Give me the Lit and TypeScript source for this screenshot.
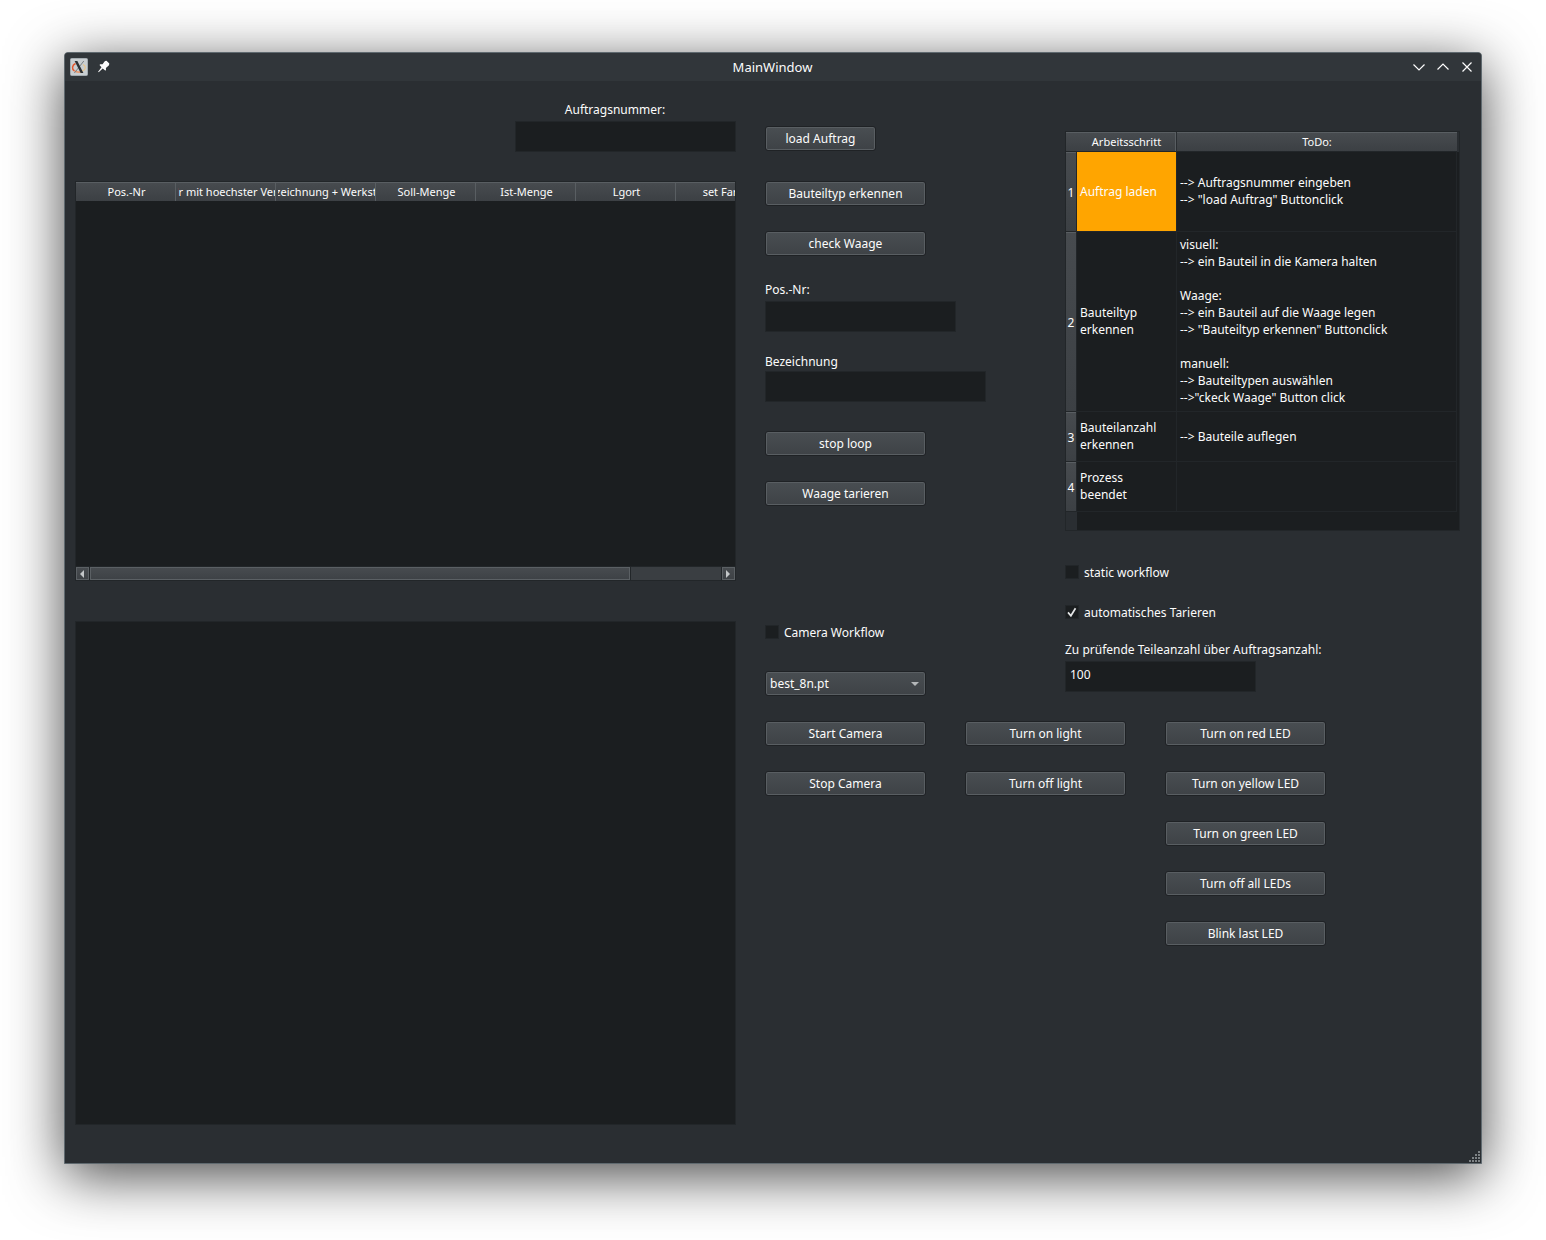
import { LitElement, html, css, svg, nothing } from "lit";
import { customElement, property } from "lit/decorators.js";

const base = css`
  *,
  *::before,
  *::after {
    box-sizing: border-box;
  }
  button,
  input,
  select {
    margin: 0;
    font: inherit;
    color: inherit;
  }
`;

const raised = css`
  .raised {
    border: 1px solid #1f2225;
    border-radius: 3px;
    background: linear-gradient(#494e52, #3e4246);
    box-shadow: inset 0 0 0 1px #595e62;
  }
`;

@customElement("push-button")
class PushButton extends LitElement {
  @property() label = "";

  static styles = [
    base,
    raised,
    css`
      :host {
        display: block;
      }
      .button {
        display: block;
        width: 100%;
        height: 25px;
        padding: 0;
        line-height: 17px;
        text-align: center;
      }
    `,
  ];

  render() {
    return html`<button class="button raised" type="button">${this.label}</button>`;
  }
}

@customElement("text-field")
class TextField extends LitElement {
  @property() label = "";
  @property() value = "";

  static styles = [
    base,
    css`
      :host {
        display: block;
      }
      .label {
        display: block;
        margin-bottom: var(--label-gap, 3px);
        padding-right: var(--label-inset, 0);
        text-align: var(--label-align, left);
        white-space: nowrap;
      }
      .input {
        display: block;
        width: 100%;
        height: 31px;
        padding: 0 4px 4px;
        border: 1px solid #222629;
        border-radius: 0;
        background: #1b1e20;
        outline: none;
      }
    `,
  ];

  render() {
    return html`
      <label class="label" for="field">${this.label}</label>
      <input class="input" id="field" type="text" .value=${this.value} />
    `;
  }
}

@customElement("check-field")
class CheckField extends LitElement {
  @property() label = "";
  @property({ type: Boolean }) checked = false;

  static styles = [
    base,
    css`
      :host {
        display: block;
      }
      .row {
        display: flex;
        align-items: center;
        gap: 5px;
        height: 18px;
      }
      .box {
        display: grid;
      }
      .input,
      .tick {
        grid-area: 1 / 1;
        width: 14px;
        height: 14px;
      }
      .input {
        appearance: none;
        border: 1px solid #222629;
        background: #1b1e20;
      }
      .tick {
        visibility: hidden;
        pointer-events: none;
      }
      .input:checked + .tick {
        visibility: visible;
      }
    `,
  ];

  render() {
    return html`
      <label class="row">
        <span class="box">
          <input class="input" type="checkbox" .checked=${this.checked} />
          <svg class="tick" viewBox="0 0 14 14" fill="none" stroke="#e4e6e7" stroke-width="1.7">
            <path d="M3 7.4 5.9 10.800 10.500 3.200" />
          </svg>
        </span>
        <span>${this.label}</span>
      </label>
    `;
  }
}

@customElement("order-table")
class OrderTable extends LitElement {
  private columns = [
    "Pos.-Nr",
    "Nr mit hoechster Vers",
    "Bezeichnung + Werkstoff",
    "Soll-Menge",
    "Ist-Menge",
    "Lgort",
    "set Farbe",
  ];

  static styles = [
    base,
    css`
      :host {
        display: block;
      }
      .frame {
        display: flex;
        flex-direction: column;
        height: 400px;
        border: 1px solid #222629;
        background: #1b1e20;
      }
      .view {
        flex: 1;
        overflow: hidden;
      }
      .table {
        width: 700px;
        table-layout: fixed;
        border-collapse: separate;
        border-spacing: 0;
      }
      .head {
        height: 19px;
        padding: 0 0 0 2px;
        border-right: 1px solid #595e62;
        background: linear-gradient(#595e62 1px, #474b4f 1px, #3c4044);
        font-size: 11px;
        font-weight: 400;
        line-height: 17px;
      }
      .clip {
        display: flex;
        justify-content: center;
        overflow: hidden;
        white-space: nowrap;
      }
      .scroll {
        display: flex;
        height: 14px;
        border-top: 1px solid #222629;
        background: #3a3e42;
      }
      .arrow,
      .thumb {
        border: 1px solid #5b6064;
        border-radius: 0;
        background: linear-gradient(#474b4f, #3e4246);
        box-shadow: 0 0 0 1px #222629;
      }
      .arrow {
        display: flex;
        align-items: center;
        width: 13px;
        padding: 0 3px;
      }
      .track {
        display: grid;
        flex: 1;
        grid-template-columns: 77fr 13fr;
        padding: 0 1px;
      }
    `,
  ];

  render() {
    return html`
      <div class="frame">
        <div class="view">
          <table class="table">
            <thead>
              <tr>
                ${this.columns.map(
                  (c) => html`<th class="head" scope="col"><div class="clip"><span>${c}</span></div></th>`,
                )}
              </tr>
            </thead>
          </table>
        </div>
        <div class="scroll">
          <button class="arrow" type="button" aria-label="Links">
            <svg width="4" height="8" viewBox="0 0 4 8" fill="#c4c7c9"><path d="M4 0v8L0 4z" /></svg>
          </button>
          <div class="track"><div class="thumb"></div></div>
          <button class="arrow" type="button" aria-label="Rechts">
            <svg width="4" height="8" viewBox="0 0 4 8" fill="#c4c7c9"><path d="M0 0v8l4-4z" /></svg>
          </button>
        </div>
      </div>
    `;
  }
}

interface Step {
  title: string;
  todo: string;
  size: "tall" | "long" | "short";
  active?: boolean;
}

@customElement("step-table")
class StepTable extends LitElement {
  private steps: Step[] = [
    {
      title: "Auftrag laden",
      todo: '--> Auftragsnummer eingeben\n--> "load Auftrag" Buttonclick',
      size: "tall",
      active: true,
    },
    {
      title: "Bauteiltyp\nerkennen",
      todo:
        "visuell:\n--> ein Bauteil in die Kamera halten\n\n" +
        'Waage:\n--> ein Bauteil auf die Waage legen\n--> "Bauteiltyp erkennen" Buttonclick\n\n' +
        'manuell:\n--> Bauteiltypen auswählen\n-->"ckeck Waage" Button click',
      size: "long",
    },
    { title: "Bauteilanzahl\nerkennen", todo: "--> Bauteile auflegen", size: "short" },
    { title: "Prozess\nbeendet", todo: "", size: "short" },
  ];

  static styles = [
    base,
    css`
      :host {
        display: block;
      }
      .frame {
        height: 400px;
        padding-right: 2px;
        border: 1px solid #222629;
        background:
          linear-gradient(#2a2e32, #2a2e32) 0 0 / 100% 20px no-repeat,
          linear-gradient(90deg, #2a2e32 11px, #1b1e20 11px);
      }
      .table {
        width: 100%;
        table-layout: fixed;
        border-collapse: separate;
        border-spacing: 0;
      }
      .col-number {
        width: 11px;
      }
      .col-step {
        width: 100px;
      }
      .head {
        height: 20px;
        padding: 0;
        border-bottom: 1px solid #222629;
        background: linear-gradient(#595e62 1px, #474b4f 1px, #3c4044);
        font-size: 11px;
        font-weight: 400;
        line-height: 17px;
      }
      .divided {
        border-right: 1px solid #2a2e32;
        box-shadow: inset -1px 0 #595e62;
      }
      .number {
        padding: 2px 0 0;
        border-right: 1px solid #222629;
        border-bottom: 1px solid #222629;
        background: linear-gradient(#595e62 1px, #474b4f 1px, #3c4044);
        font-weight: 400;
        text-align: center;
      }
      .cell {
        padding: 0 3px 1px;
        border-right: 1px solid #222629;
        border-bottom: 1px solid #222629;
        vertical-align: middle;
        white-space: pre;
      }
      .tall {
        height: 80px;
      }
      .long {
        height: 180px;
      }
      .short {
        height: 50px;
      }
      .active {
        background: #ffa500;
      }
    `,
  ];

  render() {
    return html`
      <div class="frame">
        <table class="table">
          <colgroup>
            <col class="col-number" />
            <col class="col-step" />
            <col />
          </colgroup>
          <thead>
            <tr>
              <td class="head"></td>
              <th class="head divided" scope="col">Arbeitsschritt</th>
              <th class="head" scope="col">ToDo:</th>
            </tr>
          </thead>
          <tbody>
            ${this.steps.map(
              (s, i) => html`
                <tr class=${s.size}>
                  <th class="number" scope="row">${i + 1}</th>
                  <td class="cell ${s.active ? "active" : ""}">${s.title}</td>
                  <td class="cell">${s.todo}</td>
                </tr>
              `,
            )}
          </tbody>
        </table>
      </div>
    `;
  }
}

@customElement("title-bar")
class TitleBar extends LitElement {
  static styles = [
    base,
    css`
      :host {
        display: block;
      }
      .bar {
        display: grid;
        grid-template-columns: 1fr auto 1fr;
        align-items: center;
        height: 28px;
        padding: 0 6px 0 5px;
        background: #31363a;
        font-size: 13px;
        line-height: 18px;
      }
      .group {
        display: flex;
        align-items: center;
        gap: 8px;
      }
      .end {
        justify-content: flex-end;
      }
      .title {
        margin: 0;
        font: inherit;
      }
      .icon {
        display: block;
      }
      .tool {
        display: block;
        width: 16px;
        height: 16px;
        padding: 0;
        border: 0;
        background: none;
      }
    `,
  ];

  private tool(label: string, d: string) {
    return html`
      <button class="tool" type="button" aria-label=${label}>
        <svg class="icon" width="16" height="16" viewBox="0 0 16 16" fill="none" stroke="#fcfcfc" stroke-width="1.2">
          <path d=${d} />
        </svg>
      </button>
    `;
  }

  render() {
    return html`
      <header class="bar">
        <div class="group">
          <svg class="icon" width="18" height="18" viewBox="0 0 18 18">
            <rect x=".5" y=".5" width="17" height="17" rx="1" fill="#c9ced1" stroke="#a3abb0" />
            <path d="M5.500 5.500C2 7 1.500 11 4.500 12.800" fill="none" stroke="#e4572e" stroke-width="1.5" />
            <path d="M4.500 12.800C7 14.500 10 14.300 12 13.400" fill="none" stroke="#ee8a55" stroke-width="1.4" />
            <path d="M13 6.500C16.500 8.500 16 11.500 12 13.400" fill="none" stroke="#e8c48a" stroke-width="1.2" />
            <path d="M13.800 3 4.400 15" stroke="#7a8084" stroke-width="1" />
            <path d="M4.600 3h2.800l6 12h-2.800z" fill="#2b3034" />
          </svg>
          <button class="tool" type="button" aria-label="Anheften">
            <svg class="icon" width="16" height="16" viewBox="0 0 16 16" fill="#fcfcfc">
              <path d="M10.500 1.700 13.300 4.500 13 6.200 9.900 8.900 10 11.200 9.200 11.600 6.700 9.400 2.700 13.300 2.100 12.800 5.500 8.200 3.500 6 4.200 5.300 6.500 5.300 9 2z" />
            </svg>
          </button>
        </div>
        <h1 class="title">MainWindow</h1>
        <div class="group end">
          ${this.tool("Minimieren", "M2.500 5.500 8 11l5.500-5.500")}
          ${this.tool("Maximieren", "M2.500 10.500 8 5l5.500 5.500")}
          ${this.tool("Schließen", "M3.500 3.500l9 9m0-9-9 9")}
        </div>
      </header>
    `;
  }
}

@customElement("app-root")
class AppRoot extends LitElement {
  static styles = [
    base,
    raised,
    css`
      :host {
        display: block;
        color: #fcfcfc;
        font-family: "Noto Sans", "Liberation Sans", sans-serif;
        font-size: 12px;
        line-height: 17px;
      }
      .desktop {
        display: flex;
        min-height: 100vh;
        padding: 52px 64px 76px;
        background: #fff;
        overflow: hidden;
      }
      .window {
        position: relative;
        display: flex;
        flex: 1;
        flex-direction: column;
        border: 1px solid #5f696f;
        border-radius: 4px 4px 0 0;
        background: #2a2e32;
        box-shadow: 0 12px 56px rgba(0, 0, 0, 0.72);
      }
      .bar {
        border-radius: 3px 3px 0 0;
        overflow: hidden;
      }
      .content {
        display: grid;
        flex: 1;
        grid-template-columns: minmax(0, 661fr) minmax(0, 695fr);
        column-gap: 29px;
        padding: 20px 21px 38px 10px;
      }
      .orders {
        display: flex;
        flex-direction: column;
      }
      .order-number {
        --label-align: center;
        --label-inset: 21px;
        align-self: flex-end;
        width: 221px;
        margin-bottom: 29px;
      }
      .camera {
        flex: 1;
        margin-top: 40px;
        border: 1px solid #222629;
        background: #1b1e20;
      }
      .panels {
        display: grid;
        grid-template-columns: 300px minmax(0, 1fr);
      }
      .stack {
        display: flex;
        flex-direction: column;
        align-items: flex-start;
      }
      .actions {
        padding-top: 25px;
      }
      .steps {
        padding-top: 30px;
      }
      .wide {
        width: 161px;
      }
      .narrow {
        width: 111px;
        margin-bottom: 30px;
      }
      .pair {
        display: grid;
        gap: 25px;
      }
      .position {
        width: 191px;
        margin: 25px 0 21px;
      }
      .designation {
        --label-gap: 1px;
        width: 221px;
        margin-bottom: 29px;
      }
      .camera-check {
        margin: 117px 0 30px;
      }
      .picker {
        display: grid;
        align-items: center;
      }
      .select {
        grid-area: 1 / 1;
        width: 100%;
        height: 25px;
        padding: 0 20px 0 4px;
        appearance: none;
      }
      .chevron {
        grid-area: 1 / 1;
        justify-self: end;
        margin-right: 7px;
        pointer-events: none;
      }
      .step-table {
        width: 100%;
        margin-bottom: 32px;
      }
      .static {
        margin-bottom: 22px;
      }
      .amount {
        width: 191px;
        margin-top: 20px;
      }
      .controls {
        display: grid;
        grid-template-columns: repeat(3, 161px);
        align-items: start;
        column-gap: 39px;
        margin-top: 25px;
      }
      .grip {
        position: absolute;
        right: 0;
        bottom: 0;
      }
    `,
  ];

  private buttons(labels: string[]) {
    return html`
      <div class="pair wide">${labels.map((l) => html`<push-button label=${l}></push-button>`)}</div>
    `;
  }

  private grip() {
    const dots = [0, 1, 2, 3].flatMap((row) =>
      [0, 1, 2, 3].map((col) =>
        col + row >= 3
          ? svg`<rect x=${col * 3} y=${row * 3} width="2" height="2" fill="#7d8285" />`
          : nothing,
      ),
    );
    return html`<svg class="grip" width="12" height="12" viewBox="0 0 12 12">${dots}</svg>`;
  }

  render() {
    return html`
      <div class="desktop">
        <main class="window">
          <title-bar class="bar"></title-bar>
          <div class="content">
            <section class="orders">
              <text-field class="order-number" label="Auftragsnummer:"></text-field>
              <order-table></order-table>
              <div class="camera"></div>
            </section>
            <section>
              <div class="panels">
                <div class="stack actions">
                  <push-button class="narrow" label="load Auftrag"></push-button>
                  ${this.buttons(["Bauteiltyp erkennen", "check Waage"])}
                  <text-field class="position" label="Pos.-Nr:"></text-field>
                  <text-field class="designation" label="Bezeichnung"></text-field>
                  ${this.buttons(["stop loop", "Waage tarieren"])}
                  <check-field class="camera-check" label="Camera Workflow"></check-field>
                  <div class="picker wide">
                    <select class="select raised" aria-label="Modell">
                      <option>best_8n.pt</option>
                    </select>
                    <svg class="chevron" width="8" height="4" viewBox="0 0 8 4" fill="#b4b7b9">
                      <path d="M0 0h8L4 4z" />
                    </svg>
                  </div>
                </div>
                <div class="stack steps">
                  <step-table class="step-table"></step-table>
                  <check-field class="static" label="static workflow"></check-field>
                  <check-field label="automatisches Tarieren" checked></check-field>
                  <text-field
                    class="amount"
                    label="Zu prüfende Teileanzahl über Auftragsanzahl:"
                    value="100"
                  ></text-field>
                </div>
              </div>
              <div class="controls">
                ${this.buttons(["Start Camera", "Stop Camera"])}
                ${this.buttons(["Turn on light", "Turn off light"])}
                ${this.buttons([
                  "Turn on red LED",
                  "Turn on yellow LED",
                  "Turn on green LED",
                  "Turn off all LEDs",
                  "Blink last LED",
                ])}
              </div>
            </section>
          </div>
          ${this.grip()}
        </main>
      </div>
    `;
  }
}
